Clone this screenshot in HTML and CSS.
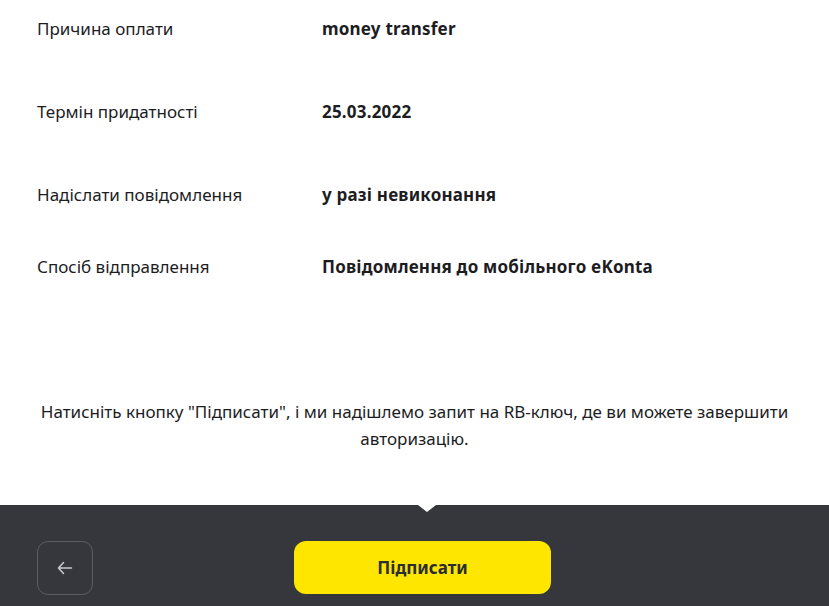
FILE: index.html
```html
<!DOCTYPE html>
<html>
<head>
  <title>Підписання платежу</title>
  <link rel="stylesheet" href="styles.css">
</head>
<body>
  <!-- Payment details -->
  <div class="details">
    <div class="row">
      <span class="label">Причина оплати</span>
      <span class="value">money transfer</span>
    </div>
    <div class="row">
      <span class="label">Термін придатності</span>
      <span class="value">25.03.2022</span>
    </div>
    <div class="row row-tight">
      <span class="label">Надіслати повідомлення</span>
      <span class="value">у разі невиконання</span>
    </div>
    <div class="row">
      <span class="label">Спосіб відправлення</span>
      <span class="value">Повідомлення до мобільного eKonta</span>
    </div>
  </div>

  <p class="hint">Натисніть кнопку "Підписати", і ми надішлемо запит на RB-ключ, де ви можете завершити авторизацію.</p>

  <!-- Bottom action bar -->
  <div class="action-bar">
    <button class="back-btn" type="button">
      <svg viewBox="0 0 16 16">
        <path d="M1.5 8h13M6.5 2.5L1.5 8l5 5.5"/>
      </svg>
    </button>
    <button class="sign-btn" type="button">Підписати</button>
  </div>
</body>
</html>
```

FILE: styles.css
```css
body {
  margin: 0;
  padding: 0;
  background: #fff;
  font-family: 'Noto Sans', 'Open Sans', Arial, sans-serif;
  color: #1d1d1f;
  width: 829px;
  height: 606px;
  display: flex;
  flex-direction: column;
  overflow: hidden;
}

/* Details list */
.details {
  padding: 17px 0 0 37px;
}

.row {
  display: grid;
  grid-template-columns: 285px 1fr;
  height: 83px;
  font-size: 17px;
  line-height: 24px;
}

.row-tight {
  height: 72px;
}

.label {
  font-weight: 400;
}

.value {
  font-weight: 700;
  letter-spacing: 0.2px;
}

.hint {
  margin: 60px 32px 0 32px;
  font-size: 17px;
  line-height: 27px;
  text-align: center;
}

/* Action bar */
.action-bar {
  position: relative;
  margin-top: auto;
  height: 101px;
  background: #36373c;
  display: flex;
  align-items: flex-start;
  padding: 36px 0 0 37px;
  box-sizing: border-box;
}

.action-bar::before {
  content: "";
  position: absolute;
  top: 0;
  left: 418px;
  border-left: 9px solid transparent;
  border-right: 9px solid transparent;
  border-top: 7px solid #fff;
}

.back-btn {
  width: 56px;
  height: 54px;
  background: none;
  border: 1px solid #5d5e63;
  border-radius: 11px;
  display: flex;
  align-items: center;
  justify-content: center;
  padding: 0;
  cursor: pointer;
}

.back-btn svg {
  width: 16px;
  height: 16px;
  fill: none;
  stroke: #c9cad0;
  stroke-width: 1.5;
  stroke-linecap: round;
  stroke-linejoin: round;
}

.sign-btn {
  margin-left: 201px;
  width: 257px;
  height: 53px;
  background: #fee600;
  border: none;
  border-radius: 12px;
  font-family: inherit;
  font-size: 17px;
  font-weight: 700;
  color: #2b2d33;
  cursor: pointer;
}
```
